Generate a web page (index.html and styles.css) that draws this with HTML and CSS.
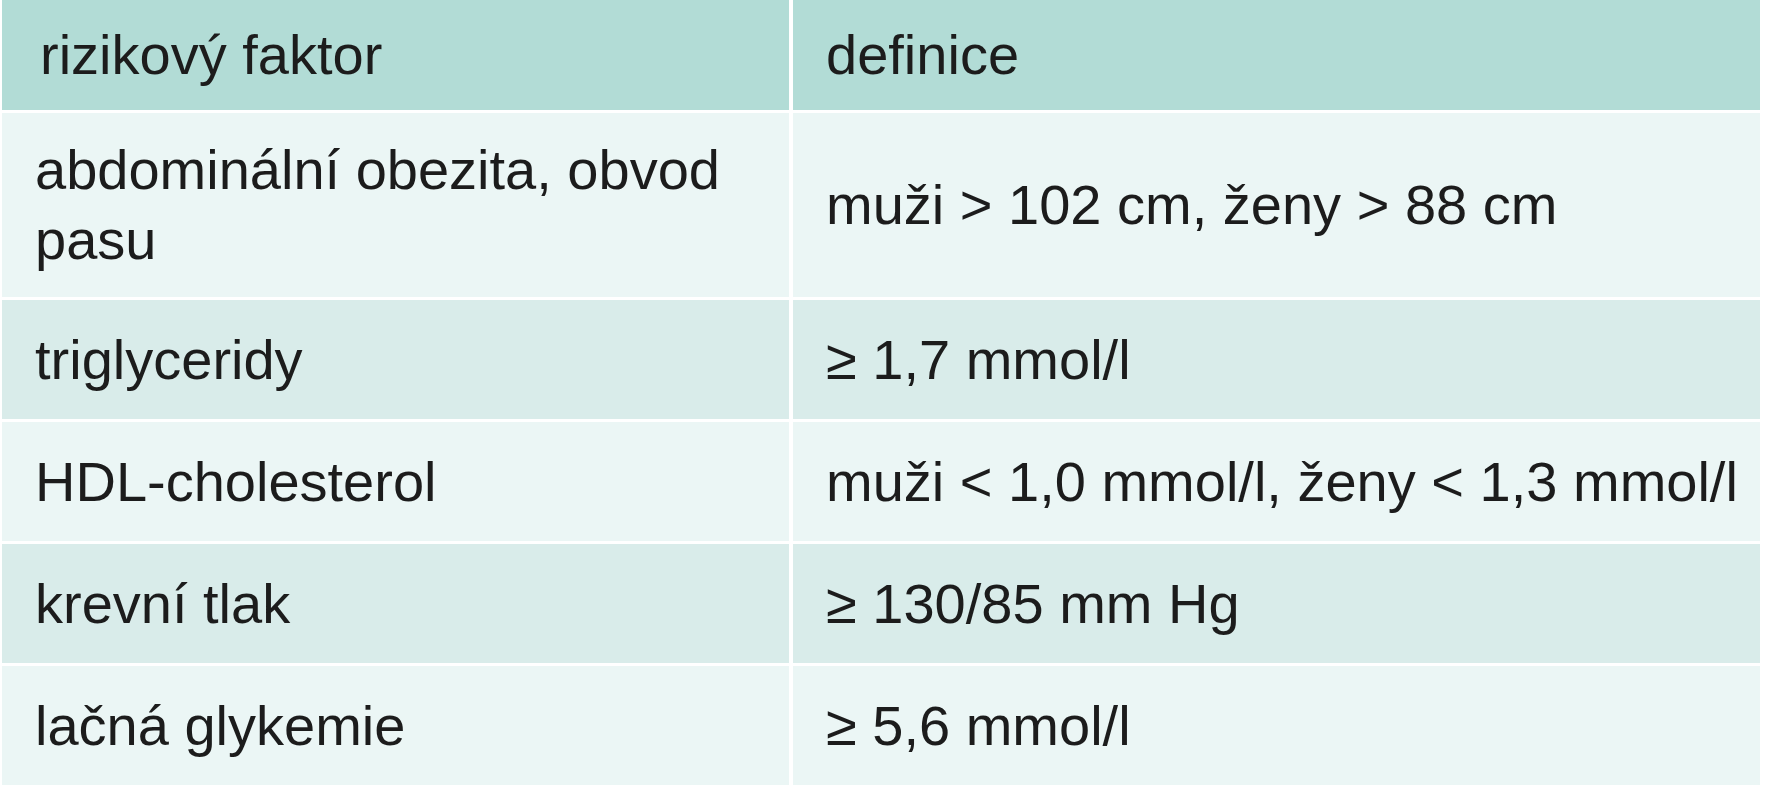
FILE: index.html
```html
<!DOCTYPE html>
<html lang="cs">
<head>
<meta charset="utf-8">
<title>Rizikové faktory</title>
<link rel="stylesheet" href="styles.css">
</head>
<body>
<div class="table">
  <div class="cell head">rizikový faktor</div>
  <div class="cell head">definice</div>

  <div class="cell light tall">abdominální obezita, obvod pasu</div>
  <div class="cell light tall">muži &gt; 102 cm, ženy &gt; 88 cm</div>

  <div class="cell dark">triglyceridy</div>
  <div class="cell dark">≥ 1,7 mmol/l</div>

  <div class="cell light">HDL-cholesterol</div>
  <div class="cell light">muži &lt; 1,0 mmol/l, ženy &lt; 1,3 mmol/l</div>

  <div class="cell dark">krevní tlak</div>
  <div class="cell dark">≥ 130/85 mm Hg</div>

  <div class="cell light">lačná glykemie</div>
  <div class="cell light">≥ 5,6 mmol/l</div>
</div>
</body>
</html>
```

FILE: styles.css
```css
html, body {
  margin: 0;
  padding: 0;
  background: #ffffff;
}

body {
  padding-left: 2px;
  font-family: "Liberation Sans", Arial, sans-serif;
  color: #1c1c1c;
}

.table {
  width: 1758px;
  display: grid;
  grid-template-columns: 787px 1fr;
  column-gap: 4px;
  row-gap: 3px;
}

.cell {
  font-size: 56px;
  line-height: 70px;
  padding: 20px 10px 20px 38px;
  display: flex;
  align-items: center;
  min-height: 119px;
  box-sizing: border-box;
}

.cell + .cell {
  padding-left: 33px;
}

.head {
  background: #b2dcd6;
  min-height: 110px;
}

.tall {
  min-height: 184px;
}

.light {
  background: #ebf6f5;
}

.dark {
  background: #d9ecea;
}
```
